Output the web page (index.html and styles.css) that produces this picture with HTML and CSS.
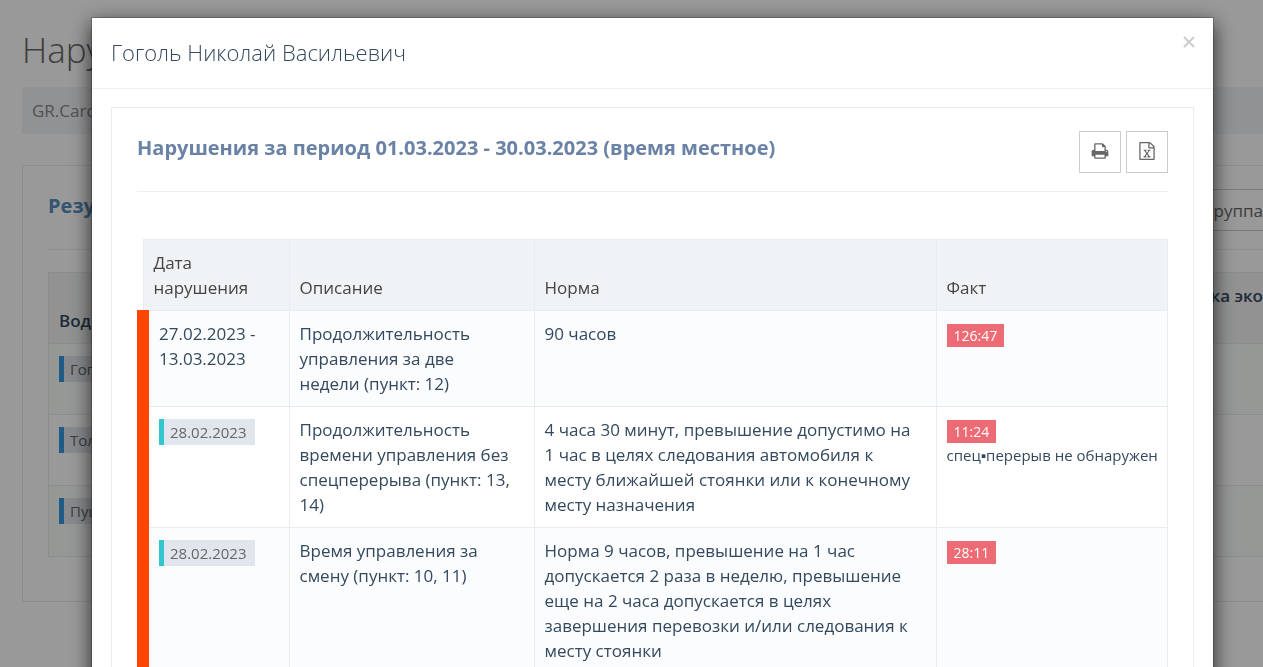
FILE: index.html
```html
<!DOCTYPE html>
<html lang="ru">
<head>
<meta charset="utf-8">
<meta name="viewport" content="width=device-width, initial-scale=1">
<title>Нарушения</title>
<link rel="stylesheet" href="styles.css">
</head>
<body>
<main class="page">
  <h1 class="page-title">Нарушения</h1>
  <nav class="breadcrumb"><a href="#">GR.Cards</a></nav>
  <section class="report">
    <header class="report-head">
      <h2 class="report-title">Результаты</h2>
      <button class="group-button" type="button">группа</button>
    </header>
    <table class="drivers">
      <thead>
        <tr><th>Водитель</th><th class="score">Оценка эко<br>&nbsp;</th></tr>
      </thead>
      <tbody>
        <tr><td><span class="tag tag-blue">Гоголь</span></td><td></td></tr>
        <tr><td><span class="tag tag-blue">Толстой</span></td><td></td></tr>
        <tr><td><span class="tag tag-blue">Пушкин</span></td><td></td></tr>
      </tbody>
    </table>
  </section>
</main>

<div class="overlay">
  <div class="modal" role="dialog" aria-modal="true" aria-labelledby="modal-title">
    <header class="modal-header">
      <h2 class="modal-title" id="modal-title">Гоголь Николай Васильевич</h2>
      <button class="close" type="button" aria-label="Закрыть">
        <svg viewBox="0 0 12 12" width="12" height="12"><path d="M1 1l10 10M11 1L1 11" fill="none" stroke="currentColor" stroke-width="2"/></svg>
      </button>
    </header>
    <div class="modal-body">
      <section class="portlet">
        <header class="portlet-head">
          <h3 class="portlet-title">Нарушения за период 01.03.2023 - 30.03.2023 (время местное)</h3>
          <div class="actions">
            <button class="icon-button" type="button" aria-label="Печать">
              <svg viewBox="0 0 1792 1792" width="18" height="18"><path fill="currentColor" d="M448 1536h896v-256h-896v256zm0-640h896v-384h-160q-40 0-68-28t-28-68v-160h-640v640zm1152 64q0-26-19-45t-45-19-45 19-19 45 19 45 45 19 45-19 19-45zm128 0v416q0 13-9.5 22.5t-22.5 9.5h-224v160q0 40-28 68t-68 28h-960q-40 0-68-28t-28-68v-160h-224q-13 0-22.5-9.5t-9.5-22.5v-416q0-79 56.5-135.5t135.5-56.5h64v-544q0-40 28-68t68-28h672q40 0 88 20t76 48l152 152q28 28 48 76t20 88v256h64q79 0 135.5 56.5t56.5 135.5z"/></svg>
            </button>
            <button class="icon-button" type="button" aria-label="Экспорт в Excel">
              <svg viewBox="0 0 1792 1792" width="18" height="18"><path fill="currentColor" d="M1596 380q28 28 48 76t20 88v1152q0 40-28 68t-68 28h-1344q-40 0-68-28t-28-68v-1600q0-40 28-68t68-28h896q40 0 88 20t76 48zm-444-244v376h376q-10-29-22-41l-313-313q-12-12-41-22zm384 1528v-1024h-416q-40 0-68-28t-28-68v-416h-768v1536h1280zm-979-234v106h281v-106h-75l103-161q5-7 10-16.5t7.5-13.5 3.5-4h2q1 4 5 10 2 4 4.5 7.5t6 8 6.5 8.5l107 161h-76v106h291v-106h-68l-192-273 195-282h67v-107h-279v107h74l-103 159q-4 7-10 16.5t-9 13.5l-2 3h-2q-1-4-5-10-6-11-17-23l-106-159h76v-107h-290v107h68l189 272-194 283h-68z"/></svg>
            </button>
          </div>
        </header>
        <table class="violations">
          <colgroup><col class="col-date"><col class="col-text"><col class="col-norm"><col class="col-fact"></colgroup>
          <thead>
            <tr><th>Дата нарушения</th><th>Описание</th><th>Норма</th><th>Факт</th></tr>
          </thead>
          <tbody>
            <tr>
              <td>27.02.2023 - 13.03.2023</td>
              <td>Продолжительность управления за две недели (пункт: 12)</td>
              <td>90 часов</td>
              <td><span class="badge">126:47</span></td>
            </tr>
            <tr>
              <td><span class="tag">28.02.2023</span></td>
              <td>Продолжительность времени управления без спецперерыва (пункт: 13, 14)</td>
              <td>4 часа 30 минут, превышение допустимо на 1 час в целях следования автомобиля к месту ближайшей стоянки или к конечному месту назначения</td>
              <td><span class="badge">11:24</span><small class="note">спец▪перерыв не обнаружен</small></td>
            </tr>
            <tr>
              <td><span class="tag">28.02.2023</span></td>
              <td>Время управления за смену (пункт: 10, 11)</td>
              <td>Норма 9 часов, превышение на 1 час допускается 2 раза в неделю, превышение еще на 2 часа допускается в целях завершения перевозки и/или следования к месту стоянки</td>
              <td><span class="badge">28:11</span></td>
            </tr>
          </tbody>
        </table>
      </section>
    </div>
  </div>
</div>
</body>
</html>
```
FILE: styles.css
```css
* { box-sizing: border-box; }

body {
  margin: 0;
  height: 100vh;
  overflow: hidden;
  background: #fff;
  color: #34495e;
  font: 17px/25px "Open Sans", "Noto Sans", sans-serif;
}

h1, h2, h3 { margin: 0; }

button { font: inherit; cursor: pointer; }

table { width: 100%; border-collapse: collapse; }

/* Page behind the dialog */
.page { padding: 25px 0 0 22px; }

.page-title {
  color: #666;
  font-size: 35px;
  font-weight: 300;
  line-height: 50px;
}

.breadcrumb {
  margin: 12px 0 31px;
  padding: 10px;
  background: #f1f4f7;
  line-height: 27px;
}

.breadcrumb a { color: #888; text-decoration: none; }

.report {
  padding: 15px 0 44px 25px;
  border: 1px solid #e7ecf1;
  border-right: 0;
}

.report-head {
  display: flex;
  justify-content: space-between;
  align-items: center;
  height: 69px;
  margin-bottom: 22px;
  padding-bottom: 10px;
  border-bottom: 1px solid #eee;
}

.report-title {
  padding-bottom: 10px;
  color: #578ebe;
  font-size: 20px;
  font-weight: 700;
}

.group-button {
  height: 42px;
  padding: 0 0 0 12px;
  border: 1px solid #ccc;
  border-right: 0;
  background: #fff;
  color: #666;
}

.drivers th,
.drivers td {
  height: 71px;
  padding: 10px;
  border: 1px solid #e7ecf1;
  text-align: left;
  vertical-align: top;
}

.drivers th {
  background: #f3f4f5;
  font-weight: 600;
  vertical-align: bottom;
}

.drivers .score {
  width: 105px;
  padding-right: 0;
  border-right: 0;
  white-space: nowrap;
}

.drivers td:last-child { border-right: 0; }

.drivers tbody tr:nth-child(odd) { background: #fafdfb; }

/* Dialog */
.overlay {
  position: fixed;
  inset: 0;
  padding: 17px 49px 0 91px;
  overflow: hidden;
  background: rgba(0, 0, 0, 0.4);
}

.modal {
  border: 1px solid rgba(0, 0, 0, 0.2);
  background: #fff;
  background-clip: padding-box;
  box-shadow: 0 6px 19px rgba(0, 0, 0, 0.7);
}

.modal-header {
  display: flex;
  justify-content: space-between;
  align-items: flex-start;
  padding: 18px 18px 19px 19px;
  border-bottom: 1px solid #efefef;
}

.modal-title {
  font-size: 22px;
  font-weight: 300;
  line-height: 33px;
}

.close {
  display: flex;
  padding: 0;
  border: 0;
  background: none;
  color: #ccc;
}

.modal-body { padding: 18px 19px; }

.portlet {
  padding: 15px 25px 25px;
  border: 1px solid #e7ecf1;
}

.portlet-head {
  display: flex;
  justify-content: space-between;
  align-items: center;
  margin-bottom: 47px;
  padding: 8px 0 18px;
  border-bottom: 1px solid #eee;
}

.portlet-title {
  padding-bottom: 10px;
  color: #6a82a5;
  font-size: 20px;
  font-weight: 700;
}

.actions { display: flex; gap: 5px; }

.icon-button {
  display: grid;
  place-items: center;
  width: 42px;
  height: 42px;
  padding: 0 0 2px;
  border: 1px solid #ccc;
  background: #fff;
  color: #666;
}

.violations { table-layout: fixed; }

.col-date { width: 146px; }
.col-text { width: 245px; }
.col-norm { width: 402px; }

.violations th,
.violations td {
  padding: 10px 18px 10px 10px;
  border: 1px solid #e7ecf1;
  text-align: left;
  vertical-align: top;
}

.violations th {
  background: #eff3f6;
  color: #444;
  font-weight: 400;
  vertical-align: bottom;
}

.violations td:first-child { border-left: 12px solid #ff4500; }

.violations tbody tr:nth-child(odd) { background: #fbfcfd; }

.tag {
  display: block;
  width: fit-content;
  margin-top: 2px;
  padding: 0 8px 0 6px;
  border-left: 5px solid #32c5d2;
  background: #e1e5ec;
  color: #666;
  font-size: 15px;
  line-height: 26px;
}

.tag-blue { border-left-color: #3598dc; }

.badge {
  display: block;
  width: fit-content;
  margin-top: 3px;
  padding: 0 7px;
  background: #ed6b75;
  color: #fff;
  font-size: 14px;
  line-height: 23px;
}

.note {
  display: block;
  font-size: 15px;
  white-space: nowrap;
}
```
